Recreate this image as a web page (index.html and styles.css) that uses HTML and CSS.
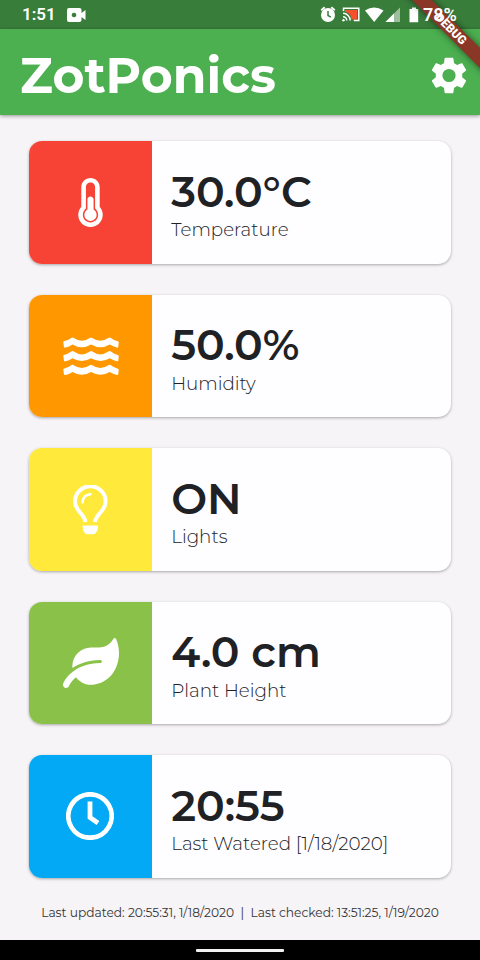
FILE: index.html
```html
<!DOCTYPE html>
<html lang="en">
<head>
<meta charset="utf-8">
<title>ZotPonics</title>
<link rel="stylesheet" href="styles.css">
</head>
<body>
<div class="app">
<div class="status">
  <span class="time">1:51</span>
  <svg class="cam" viewBox="0 0 19 14"><path fill-rule="evenodd" d="M2 0h10.500q2 0 2 2v3l4-3v10l-4-3v3q0 2-2 2H2q-2 0-2-2V2q0-2 2-2zM7 4.700a2.300 2.300 0 1 0 .01 0z"/></svg>
  <svg class="tray" viewBox="0 0 100 20">
    <circle cx="8" cy="11" r="7"/>
    <path d="M1.200 6.300 4.700 3.300M14.800 6.300 11.300 3.300" fill="none" stroke="#fff" stroke-width="1.800"/>
    <path d="M8 7v4.500l2.800 1.700" fill="none" stroke="#397d3b" stroke-width="1.500"/>
    <path d="M25 6h12v9.500h-5.500C31 11 29 8.500 25 8z" fill="#f4512c"/>
    <path d="M23.500 7V4.200h15.300v12.300h-5M23 9.300a7.200 7.200 0 0 1 7.200 7.200M23 12.700a3.800 3.800 0 0 1 3.800 3.800" fill="none" stroke="#fff" stroke-width="1.500"/>
    <circle cx="23.500" cy="16.200" r="1.200"/>
    <path d="M45 6.500q9-6 18.500 0L54.200 18z"/>
    <path d="M80 3.500V18H65.500z" opacity=".5"/><path d="M74 9.500V18H65.500z"/>
    <path d="M89.500 5H92V3.500h4V5h2.200v13.200h-8.700z"/>
  </svg>
  <span class="pct">78%</span>
</div>
<div class="banner">DEBUG</div>
<header class="bar">
  <h1>ZotPonics</h1>
  <svg class="gear" viewBox="2.200 2 19.600 20"><path d="M19.140 12.940c.04-.3.060-.61.060-.94 0-.32-.02-.64-.07-.94l2.030-1.580c.18-.14.230-.41.120-.61l-1.920-3.320c-.12-.22-.37-.29-.59-.22l-2.390.96c-.5-.38-1.030-.7-1.620-.94l-.36-2.540c-.04-.24-.24-.41-.48-.41h-3.840c-.24 0-.43.170-.47.410l-.36 2.540c-.59.240-1.130.570-1.620.940l-2.390-.96c-.22-.08-.47 0-.59.220L2.740 8.870c-.12.210-.08.470.120.610l2.030 1.580c-.05.300-.09.630-.09.940s.02.640.070.940l-2.030 1.580c-.18.140-.23.410-.12.610l1.920 3.320c.12.220.370.290.590.220l2.390-.96c.5.380 1.030.700 1.620.940l.36 2.540c.05.240.240.410.480.410h3.840c.24 0 .44-.17.470-.41l.36-2.540c.59-.24 1.130-.56 1.620-.94l2.390.96c.22.080.470 0 .59-.22l1.920-3.320c.12-.22.070-.47-.12-.61l-2.010-1.580zM12 15.600A3.600 3.600 0 1 1 12 8.400a3.600 3.600 0 0 1 0 7.200z"/></svg>
</header>
<main class="cards">
  <section class="card">
    <div class="tile red"><svg class="thermo" viewBox="0 0 256 512"><path d="M192 384c0 35.346-28.654 64-64 64s-64-28.654-64-64c0-23.685 12.876-44.349 32-55.417V224c0-17.673 14.327-32 32-32s32 14.327 32 32v104.583c19.124 11.068 32 31.732 32 55.417zm32-84.653c19.912 22.563 32 52.194 32 84.653 0 70.696-57.303 128-128 128-.299 0-.609-.001-.909-.003C56.789 511.509-.357 453.636.002 383.333.166 351.135 12.210 321.755 32 299.347V96c0-53.019 42.981-96 96-96s96 42.981 96 96v203.347zM208 384c0-34.339-19.370-52.190-32-66.502V96c0-26.467-21.533-48-48-48S80 69.533 80 96v221.498c-12.732 14.428-31.825 32.100-31.999 66.080-.224 43.876 35.563 80.116 79.423 80.420L128 464c44.112 0 80-35.888 80-80z"/></svg></div>
    <div class="info"><div class="value">30.0°C</div><div class="label">Temperature</div></div>
  </section>
  <section class="card">
    <div class="tile orange"><svg class="waves" viewBox="0 0 56 38"><g id="w"><path d="M.7 4.300Q5 3.500 8.200.9q1.300-1 2.600 0 8 5.600 16 0 1.200-1 2.500 0 8 5.600 16 0 1.300-1 2.600 0 3.200 2.600 7 3.400 1 .3.800 1.400l-.4 4q-.3 1.200-1.500.9-3.600-.8-7.100-3-9 5.500-18.600 0-9.500 5.500-18.600 0-3.500 2.300-7.100 3-1.200.3-1.500-.9l-.5-4q-.2-1.100.4-1.400z"/></g><use href="#w" y="13.700"/><use href="#w" y="27.400"/></svg></div>
    <div class="info"><div class="value">50.0%</div><div class="label">Humidity</div></div>
  </section>
  <section class="card">
    <div class="tile yellow"><svg class="bulb" viewBox="0 0 35 50"><path d="M12.500 37C11.500 29 2 26 2 16.500a15.300 15.300 0 0 1 30.600 0C32.600 26 23 29 22 37" fill="none" stroke="#fff" stroke-width="4"/><path d="M9.500 18.500q0-9 9-9.500" fill="none" stroke="#fff" stroke-width="2.300"/><path d="M9.500 40.500h15.600q0 5-2.300 7.500-1 1.300-2.800 1.300h-5.600q-1.800 0-2.700-1.300-2.200-3-2.200-7.500z"/></svg></div>
    <div class="info"><div class="value">ON</div><div class="label">Lights</div></div>
  </section>
  <section class="card">
    <div class="tile green"><svg class="leaf" viewBox="0 0 576 512"><path d="M546.200 9.700c-5.600-12.500-21.600-13-28.300-1.200C486.900 62.400 431.400 96 368 96h-80C182 96 96 182 96 288c0 7 .8 13.700 1.500 20.500C161.300 262.800 253.400 224 384 224c8.800 0 16 7.200 16 16s-7.200 16-16 16C132.600 256 26 410.100 2.400 468c-6.600 16.300 1.200 34.900 17.500 41.600 16.400 6.800 35-1.100 41.800-17.300 1.500-3.600 20.900-47.900 71.900-90.600 32.400 43.900 94 85.800 174.900 77.200C465.500 467.500 576 326.700 576 154.300c0-50.200-10.800-102.200-29.800-144.600z"/></svg></div>
    <div class="info"><div class="value">4.0 cm</div><div class="label">Plant Height</div></div>
  </section>
  <section class="card">
    <div class="tile blue"><svg class="clock" viewBox="0 0 48 48"><path d="M24 2.300a21.700 21.700 0 1 0 .01 0zM24 9.500V25.500L32 31" fill="none" stroke="#fff" stroke-width="4.800"/></svg></div>
    <div class="info"><div class="value">20:55</div><div class="label">Last Watered [1/18/2020]</div></div>
  </section>
</main>
<footer class="foot"><span>Last updated: 20:55:31, 1/18/2020&nbsp; |&nbsp; Last checked: 13:51:25, 1/19/2020</span></footer>
<nav class="nav"><i></i></nav>
</div>
</body>
</html>
```
FILE: styles.css
```css
* { box-sizing: border-box; }
body { margin: 0; }
.app { width: 480px; height: 960px; overflow: clip; position: relative; display: flex; flex-direction: column; background: #f6f4f7; font-family: Montserrat, Inter, sans-serif; color: #202124; }
svg { display: block; fill: #fff; flex: none; }
.status { height: 29px; background: #397d3b; display: flex; align-items: center; padding-left: 22px; color: #fff; font: 600 17px/29px Roboto, sans-serif; }
.time { width: 45px; }
.cam { width: 19px; height: 14px; margin-top: 1px; }
.tray { width: 100px; height: 20px; margin: 4px 0 0 234px; align-self: flex-start; }
.pct { margin-left: 3px; position: relative; z-index: 3; font-size: 18px; }
.banner { position: absolute; z-index: 2; left: 381px; top: 22px; width: 140px; height: 14px; background: #8b3728; color: #fff; font: 900 12px/14px Roboto, sans-serif; text-align: center; transform: rotate(45deg); box-shadow: 0 0 7px rgba(0,0,0,.55); }
.bar { height: 86px; flex: none; background: #4caf50; display: flex; align-items: center; justify-content: space-between; padding: 4px 13px 0 20px; box-shadow: 0 1px 4px rgba(0,0,0,.4); }
h1 { margin: 4px 0 0; font-size: 48.800px; line-height: 60px; font-weight: 700; color: #fff; white-space: nowrap; }
.gear { width: 36px; height: 37px; margin-top: 2px; }
.cards { padding: 26.200px 29px 0; display: flex; flex-direction: column; gap: 30.800px; }
.card { height: 122.700px; display: flex; background: #fefdff; border-radius: 13px; overflow: hidden; box-shadow: 0 1px 3px rgba(0,0,0,.32); }
.tile { width: 122.500px; display: flex; align-items: center; justify-content: center; }
.red { background: #f64336; }
.orange { background: #ff9800; }
.yellow { background: #ffe93b; }
.green { background: #8ac249; }
.blue { background: #04a9f5; }
.thermo { width: 25px; height: 49px; }
.waves { width: 56px; height: 38px; margin: 0 0 1px 1px; }
.bulb { width: 35px; height: 50px; }
.leaf { width: 56px; height: 50px; margin-left: 1px; }
.clock { width: 48px; height: 48px; }
.info { padding: 26.400px 0 0 19.700px; white-space: nowrap; }
.value { font-size: 42.600px; line-height: 48px; font-weight: 600; }
.label { font-size: 18.300px; line-height: 24px; margin-top: 2.500px; font-weight: 300; }
.foot { flex: 1; padding-top: 26px; text-align: center; font-size: 12.220px; line-height: 18px; white-space: nowrap; color: #333; }
.nav { height: 20px; background: #000; display: flex; justify-content: center; align-items: center; }
.nav i { width: 88px; height: 3px; background: #f1f1f1; border-radius: 1px; margin-top: 1px; }
```
